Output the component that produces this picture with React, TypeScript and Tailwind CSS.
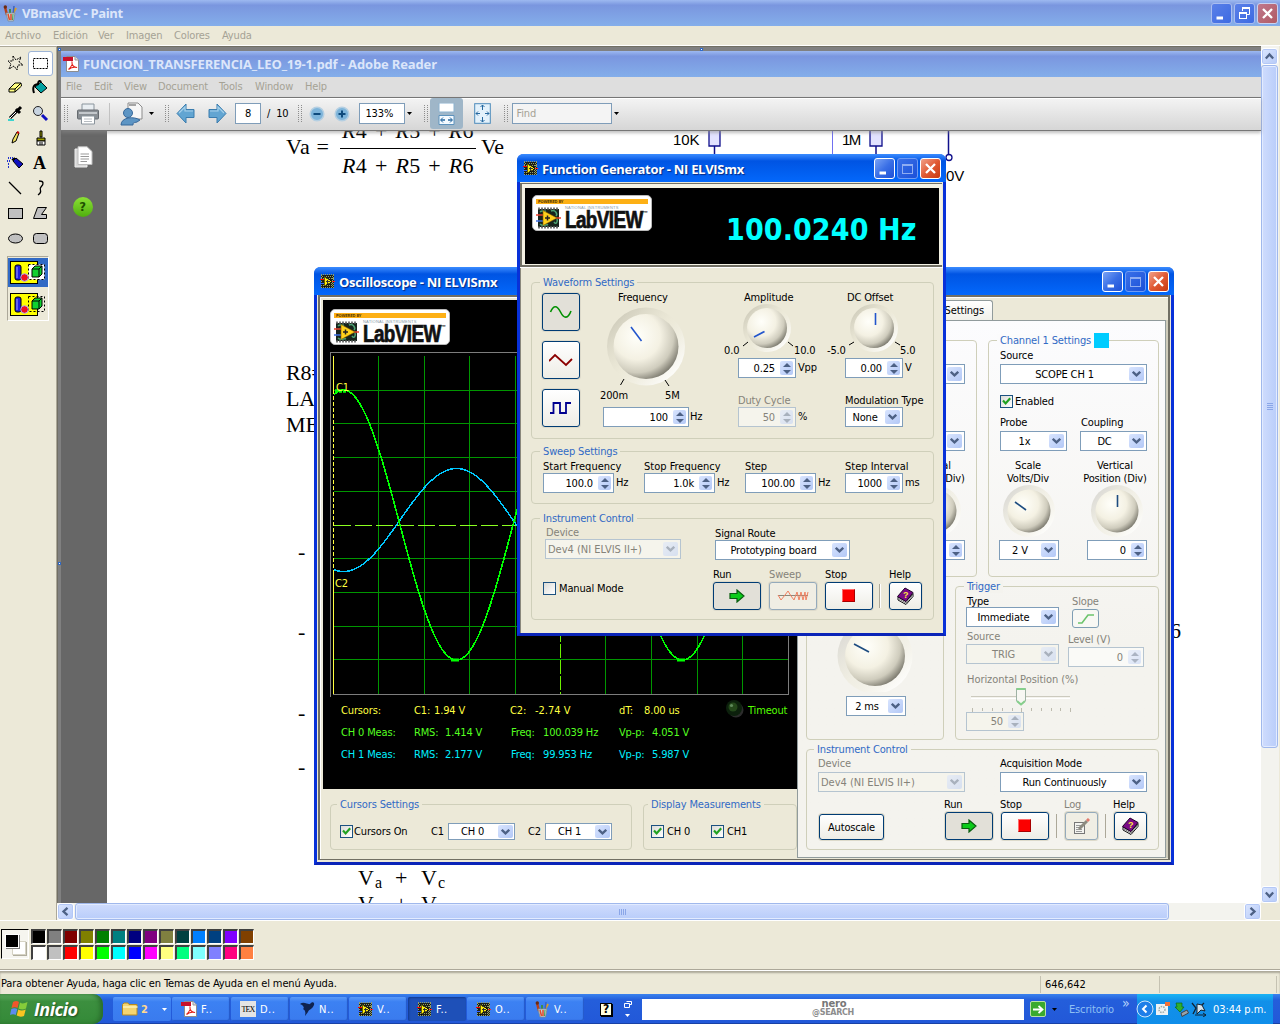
import React from 'react';

type Kids = { children?: React.ReactNode };

const T = ({ c = '', children }: { c?: string } & Kids) => (
  <div className={'h-[13px] shrink-0 whitespace-pre leading-[13px] ' + c}>{children}</div>
);

/* ---------- small XP controls ---------- */

const Chevron = () => (
  <svg width="9" height="6" viewBox="0 0 9 6" fill="none" stroke="#4d6185" strokeWidth="2.3">
    <path d="M0.8 0.8 4.5 4.4 8.2 0.8" />
  </svg>
);

const Select = ({ c, text, off = false, left = false }: { c: string; text: string; off?: boolean; left?: boolean }) => (
  <div className={'flex shrink-0 border p-[2px] ' + (off ? 'border-[#b5c4d0] bg-[#f5f4ec] ' : 'border-[#7f9db9] bg-white ') + c}>
    <div className={'flex min-w-0 flex-1 items-center whitespace-nowrap leading-[13px] ' + (left ? 'tracking-[0px] ' : 'justify-center pr-[3px] ') + (off ? 'text-[#85837a]' : 'text-black')}>{text}</div>
    <div className={'flex w-[15px] items-center justify-center rounded-[2px] bg-gradient-to-br from-[#d8e4fe] to-[#b3c8f6] ' + (off ? 'opacity-45' : '')}>
      <Chevron />
    </div>
  </div>
);

const Spin = ({ c, text, off = false }: { c: string; text: string; off?: boolean }) => (
  <div className={'flex shrink-0 border p-[2px] ' + (off ? 'border-[#b5c4d0] bg-[#f5f4ec] ' : 'border-[#7f9db9] bg-white ') + c}>
    <div className={'flex min-w-0 flex-1 items-center justify-end pr-[5px] leading-[13px] ' + (off ? 'text-[#85837a]' : 'text-black')}>{text}</div>
    <div className={'flex w-[13px] flex-col items-center justify-center gap-[3px] rounded-[2px] bg-gradient-to-br from-[#d8e4fe] to-[#b3c8f6] ' + (off ? 'opacity-45' : '')}>
      <svg width="8" height="4" viewBox="0 0 8 4"><path d="M0 4 4 0 8 4Z" fill="#4d6185" /></svg>
      <svg width="8" height="4" viewBox="0 0 8 4"><path d="M0 0 4 4 8 0Z" fill="#4d6185" /></svg>
    </div>
  </div>
);

const Check = ({ on = false }: { on?: boolean }) => (
  <div className="flex h-[13px] w-[13px] shrink-0 items-center justify-center border border-[#1c5180] bg-gradient-to-br from-[#dcdcd7] to-white">
    {on && <svg width="9" height="9" viewBox="0 0 9 9" fill="none" stroke="#21a121" strokeWidth="2.2"><path d="M1 3.6 3.6 6.4 8.2 1.2" /></svg>}
  </div>
);

const Btn = ({ c, off = false, down = false, children }: { c: string; off?: boolean; down?: boolean } & Kids) => (
  <div className={'flex h-[28px] shrink-0 items-center justify-center rounded-[3px] border shadow-[0_0_0_1px_#dddacb] ' + (off ? 'border-[#94aabb] bg-[#f0eee4] ' : down ? 'border-[#003c74] bg-[#e2e0d8] ' : 'border-[#003c74] bg-gradient-to-b from-white to-[#eeede6] ') + c}>
    {children}
  </div>
);

const Group = ({ c, title, lc = 'bg-[#ece9d8]', extra, children }: { c: string; title: string; lc?: string; extra?: React.ReactNode } & Kids) => (
  <div className={'shrink-0 rounded-[4px] border border-[#cfcfba] ' + c}>
    <div className="-mt-[7px] ml-[8px] flex h-[13px] items-center">
      <span className={'h-[13px] whitespace-nowrap px-[3px] leading-[13px] text-[#316ac5] ' + lc}>{title}</span>
      {extra}
    </div>
    {children}
  </div>
);

const Knob = ({ w, h, cx, cy, r, rim, p, ticks = '', c = '', dark = false }: { w: number; h: number; cx: number; cy: number; r: number; rim: number; p: string; ticks?: string; c?: string; dark?: boolean }) => {
  const id = 'k' + w + h + cx + (dark ? 'd' : '');
  return (
    <svg width={w} height={h} viewBox={`0 0 ${w} ${h}`} className={'shrink-0 ' + c}>
      <defs>
        <linearGradient id={id + 'a'} x1="0.1" y1="0.1" x2="0.9" y2="0.9">
          <stop offset="0" stopColor={dark ? '#d9d8d4' : '#cdcab9'} />
          <stop offset="0.5" stopColor="#ece9d8" stopOpacity="0.5" />
          <stop offset="1" stopColor="#ffffff" />
        </linearGradient>
        <radialGradient id={id + 'b'} cx="0.36" cy="0.34" r="0.72">
          <stop offset="0" stopColor="#fffffa" />
          <stop offset="0.5" stopColor="#f4f1e3" />
          <stop offset="0.78" stopColor="#cfccbd" />
          <stop offset="1" stopColor="#77756a" />
        </radialGradient>
      </defs>
      <circle cx={cx} cy={cy} r={rim} fill={`url(#${id}a)`} />
      <circle cx={cx} cy={cy} r={r} fill={`url(#${id}b)`} />
      <path d={p} stroke={dark ? '#1d4c80' : '#2255cc'} strokeWidth="1.6" fill="none" />
      <path d={ticks} stroke="#000" strokeWidth="1" fill="none" />
    </svg>
  );
};

/* ---------- icons ---------- */

const LvIcon = ({ s = 15 }: { s?: number }) => (
  <svg width={s} height={s} viewBox="0 0 15 15" shapeRendering="crispEdges" className="shrink-0">
    <rect x="1" y="1" width="13" height="13" fill="#1c1f16" />
    <path d="M1 .5H14M1 13.500H14M2 2.500H14M1 11.500H14M1 4.500H14M1 9.500H14" stroke="#93a06a" strokeDasharray="1 1" />
    <path d="M1.500 1V14M13.500 1V14M12.500 2V13" stroke="#93a06a" strokeDasharray="1 1" />
    <path d="M0 5.500H4" stroke="#f00" /><path d="M0 9.500H4" stroke="#36f" /><path d="M11 7.500H15" stroke="#f22" />
    <path d="M4 2.500V12.500L12 7.500Z" fill="#ffee10" stroke="#000" strokeWidth=".6" />
    <path d="M5.500 7.500H9.500M7.500 5.500V9.500" stroke="#333" />
  </svg>
);

const PaintIcon = () => (
  <svg width="15" height="17" viewBox="0 0 15 17" className="shrink-0">
    <path d="M4 10 2 2" stroke="#b8401c" strokeWidth="2.4" /><circle cx="2.300" cy="2" r="1.700" fill="#6b2a12" />
    <path d="M7 10 7 4" stroke="#3d8f4a" strokeWidth="2" /><path d="M9 10 13 3" stroke="#e0a020" strokeWidth="2" />
    <path d="M10 10 11 1" stroke="#3b62c0" strokeWidth="1.500" />
    <path d="M3 8H12L10.500 16H5Z" fill="#c9d3d8" stroke="#7e8a90" strokeWidth=".8" /><path d="M5 9 6.500 15M8 9V15" stroke="#e04a28" strokeWidth="1.500" /><path d="M10 9 9.500 15" stroke="#3da44e" />
  </svg>
);

const PdfIcon = ({ c = '' }: { c?: string }) => (
  <svg width="16" height="16" viewBox="0 0 16 16" className={'shrink-0 ' + c}>
    <path d="M3.500 .5H12L15.500 4V15.500H3.500Z" fill="#fff" stroke="#8d8d8d" /><path d="M12 .5V4H15.500" fill="#ddd" stroke="#999" />
    <path d="M0 1H10V5H0Z" fill="#c8102a" /><path d="M5.500 13.500C8 11 9.500 8 9 6.500 8.500 9 11 11.500 14 11.500 11 10.500 8 11.500 5.500 13.500Z" fill="none" stroke="#e2231a" strokeWidth="1.100" />
  </svg>
);

const RunArrow = () => (
  <svg width="16" height="14" viewBox="0 0 16 14"><path d="M1 4.500H8V1L15 7 8 13V9.500H1Z" fill="#0ccb1a" stroke="#0a5d10" strokeWidth="1.200" /></svg>
);
const StopSq = () => <div className="-mt-px mr-px h-[13px] w-[13px] border border-t-[#ff6a6a] border-l-[#ff6a6a] border-r-[#a80000] border-b-[#a80000] bg-[#fb0000]" />;
const HelpBook = () => (
  <svg width="19" height="18" viewBox="0 0 19 18">
    <path d="M2 10 10 14.500 17 6.500V9.500L10 17.500 2 13Z" fill="#fff" stroke="#111" /><path d="M3 12 10 16 16.500 8.500" stroke="#777" fill="none" />
    <path d="M1.500 9.500 9 1 17 5.500 10 14.500Z" fill="#7a0a86" stroke="#20002a" />
    <text x="7" y="11" fontSize="9" fontWeight="700" fill="#ffe93b" fontFamily="Liberation Sans">?</text>
  </svg>
);

const WinBtn = ({ kind, tone = 'blue', act = true }: { kind: 'min' | 'max' | 'restore' | 'close'; tone?: string; act?: boolean }) => (
  <div className={'flex h-[21px] w-[21px] shrink-0 items-center justify-center rounded-[3px] border ' +
    (kind === 'close' ? (act ? 'border-white bg-gradient-to-br from-[#f0a088] via-[#e05a34] to-[#c8380c]' : 'border-[#c9d2f0] bg-gradient-to-br from-[#c0788c] to-[#b05a64]')
      : tone === 'dim' ? 'border-[#6f9bf4] bg-gradient-to-br from-[#3a70e8] to-[#1c50d8]'
      : act ? 'border-white bg-gradient-to-br from-[#7aa2f4] via-[#3a6fe6] to-[#1f50d6]' : 'border-[#a9bdf0] bg-gradient-to-br from-[#5a80e8] to-[#3d6ae2]')}>
    <svg width="15" height="15" viewBox="0 0 15 15" fill="none" stroke="#fff">
      {kind === 'min' && <path d="M2.500 12H9" strokeWidth="3" />}
      {kind === 'max' && <><rect x="2.500" y="3.500" width="10" height="9" stroke="#8fadf2" /><path d="M2 4H13" stroke="#8fadf2" strokeWidth="2" /></>}
      {kind === 'restore' && <><path d="M5.500 5V2.500H12.500V8.500H10" /><path d="M5 2H13" strokeWidth="2" /><rect x="2.500" y="6.500" width="7" height="6" /><path d="M2 7H10" strokeWidth="2" /></>}
      {kind === 'close' && <path d="M3 3 12 12M12 3 3 12" strokeWidth="2.300" />}
    </svg>
  </div>
);

const TitleBar = ({ title, tc }: { title: string; tc: string }) => (
  <div className="flex h-[28px] shrink-0 items-center rounded-t-[6px] bg-gradient-to-b from-[#3a8cff] via-[#0054e3] via-25% to-[#0468fb] pr-[5px] pl-[6px]">
    <LvIcon />
    <div className={"ml-[4px] flex-1 whitespace-nowrap pt-[2px] font-['Open_Sans'] text-[13px] leading-[18px] font-bold text-white [text-shadow:1px_1px_1px_#0a2a80] " + tc}>{title}</div>
    <div className="flex gap-[2px] pt-px"><WinBtn kind="min" /><WinBtn kind="max" tone="dim" /><WinBtn kind="close" /></div>
  </div>
);

const LabLogo = ({ c }: { c: string }) => (
  <div className={'h-[36px] w-[120px] shrink-0 rounded-[5px] border border-[#b9b9b9] bg-white px-[3px] pt-[3px] ' + c}>
    <div className="h-[5px] bg-[#fdb015] pl-[2px] text-[4px] leading-[5px] font-bold text-[#5a3a00]">POWERED BY</div>
    <div className="flex pt-[2px]">
      <svg width="25" height="23" viewBox="0 0 25 23" className="mt-px shrink-0">
        <rect x="2" y="2" width="21" height="18" fill="#17241c" />
        <path d="M2 1.500H23M2 20.500H23" stroke="#777" strokeWidth="2" strokeDasharray="2 1" />
        <path d="M4 17C7 20 10 17 12 18M15 4C19 2 22 7 20 9M18 15C20 18 22 15 21 12M4 5C6 3 8 5 10 4" stroke="#4ea373" strokeWidth="1.500" fill="none" />
        <path d="M0 8H8" stroke="#e8402c" strokeWidth="1.500" /><path d="M0 14H8" stroke="#3d6fe0" strokeWidth="1.500" /><path d="M19 11H25" stroke="#e8402c" strokeWidth="1.500" />
        <path d="M7 3.500V18.500L21 11Z" fill="#ffd21c" stroke="#8a5a00" strokeWidth=".6" /><path d="M9 11H14M11.500 8.500V13.500" stroke="#222" strokeWidth="1.500" />
      </svg>
      <div className="ml-[4px] font-['Liberation_Sans']">
        <div className="h-[4px] text-[4px] leading-[4px] tracking-[0.2px] whitespace-nowrap text-[#8899a6]">NATIONAL INSTRUMENTS</div>
        <div className="flex h-[19px] origin-left scale-x-[.82] text-[23px] leading-[20px] font-bold tracking-[-0.7px] text-[#111] [-webkit-text-stroke:0.7px_#111]">LabVIEW<span className="text-[6px] leading-[7px] [-webkit-text-stroke:0px]">™</span></div>
      </div>
    </div>
  </div>
);

/* ---------- Function generator ---------- */

const Unit = ({ children }: Kids) => <T c="ml-[2px] mt-[3px]">{children}</T>;

const FunctionGenerator = () => (
  <div className="absolute top-[154px] left-[517px] flex h-[482px] w-[429px] flex-col rounded-t-[7px] border-x-[3px] border-b-[3px] border-[#0831d9] border-b-[#0a24b8] bg-[#ece9d8]">
    <div className="-mx-[3px] flex flex-col"><TitleBar title="Function Generator - NI ELVISmx" tc="tracking-[-0.3px]" /></div>
    <div className="flex h-[86px] shrink-0 flex-col border-b border-[#fff] pt-px pr-[1px]">
      <div className="h-[84px] border-t border-b-2 border-l-2 border-[#716f64] bg-[#f4f2e4] pt-[4px] pr-[2px] pl-[3px]">
        <div className="flex h-[76px] w-[414px] bg-black">
          <LabLogo c="mt-[7px] ml-[7px]" />
          <div className="mt-[27px] ml-[74px] text-[30px] leading-[30px] font-bold tracking-[0.1px] whitespace-nowrap text-[#00ffff]">100.0240 Hz</div>
        </div>
      </div>
    </div>
    <div className="flex flex-1 flex-col border-l border-[#8a887c] pl-[10px]">
      <Group c="mt-[14px] flex h-[157px] w-[403px] flex-col" title="Waveform Settings">
        <div className="flex">
          <div className="mt-[4px] ml-[10px] flex w-[38px] flex-col gap-[10px]">
            <Btn c="h-[38px]! w-[38px]" down><svg width="24" height="14" viewBox="0 0 24 14" fill="none" stroke="#009000" strokeWidth="1.600"><path d="M1.500 7C4.500 0 8 0 11.500 7S19 14 22 6" /></svg></Btn>
            <Btn c="h-[38px]! w-[38px]"><svg width="24" height="14" viewBox="0 0 24 14" fill="none" stroke="#8b0000" strokeWidth="1.800"><path d="M0 8 6 2 17 12 23 6" /></svg></Btn>
            <Btn c="h-[38px]! w-[38px]"><svg width="24" height="14" viewBox="0 0 24 14" fill="none" stroke="#000090" strokeWidth="1.800"><path d="M1 12H4.500V2H11V12H17V2H22" /></svg></Btn>
          </div>
          <div className="mt-[2px] ml-[10px] flex w-[124px] flex-col">
            <T c="ml-[28px]">Frequency</T>
            <Knob w={90} h={85} cx={48} cy={42.500} r={32.500} rim={39} p="M33 23 43.500 37" ticks="M26 75 22.500 81M67 76 71 82" c="ml-[8px]" />
            <div className="flex"><T c="ml-[10px] w-[65px]">200m</T><T>5M</T></div>
            <div className="mt-[5px] flex"><Spin c="ml-[13px] h-[20px] w-[86px]" text="100" /><T c="mt-[3px] ml-[1px]">Hz</T></div>
          </div>
          <div className="mt-[2px] flex w-[106px] flex-col">
            <T c="ml-[30px]">Amplitude</T>
            <div className="ml-[10px] flex items-end"><T c="w-[17px]">0.0</T><Knob w={52} h={53} cx={26} cy={24} r={20} rim={24} p="M13 33 23.500 27.500" ticks="M2 42 7 38M47 38 52 42" /><T c="ml-[1px] w-[24px]">10.0</T></div>
            <div className="mt-[1px] flex"><Spin c="ml-[24px] h-[20px] w-[58px]" text="0.25" /><Unit>Vpp</Unit></div>
            <T c="mt-[16px] ml-[24px] text-[#85837a]">Duty Cycle</T>
            <div className="flex"><Spin off c="ml-[24px] h-[20px] w-[58px]" text="50" /><Unit>%</Unit></div>
          </div>
          <div className="mt-[2px] flex w-[110px] flex-col">
            <T c="ml-[27px]">DC Offset</T>
            <div className="ml-[7px] flex items-end"><T c="w-[20px]">-5.0</T><Knob w={53} h={53} cx={27} cy={24} r={20} rim={24} p="M28.500 9V21" ticks="M2 41 7 38M48 38 53 41" /><T>5.0</T></div>
            <div className="mt-[1px] flex"><Spin c="ml-[25px] h-[20px] w-[58px]" text="0.00" /><Unit>V</Unit></div>
            <T c="mt-[16px] ml-[25px]">Modulation Type</T>
            <Select c="ml-[25px] h-[20px] w-[58px]" text="None" />
          </div>
        </div>
      </Group>
      <Group c="mt-[12px] h-[53px] w-[403px]" title="Sweep Settings">
        <div className="mt-[2px] ml-[11px] flex">
          <div className="w-[101px]"><T c="tracking-[0px]">Start Frequency</T><div className="flex"><Spin c="h-[20px] w-[71px]" text="100.0" /><Unit>Hz</Unit></div></div>
          <div className="w-[101px]"><T c="tracking-[0px]">Stop Frequency</T><div className="flex"><Spin c="h-[20px] w-[71px]" text="1.0k" /><Unit>Hz</Unit></div></div>
          <div className="w-[100px]"><T>Step</T><div className="flex"><Spin c="h-[20px] w-[71px]" text="100.00" /><Unit>Hz</Unit></div></div>
          <div><T c="tracking-[0px]">Step Interval</T><div className="flex"><Spin c="h-[20px] w-[58px]" text="1000" /><Unit>ms</Unit></div></div>
        </div>
      </Group>
      <Group c="mt-[14px] h-[102px] w-[403px]" title="Instrument Control">
        <div className="flex">
          <div className="w-[170px] pl-[11px]">
            <T c="mt-[1px] ml-[3px] text-[#85837a]">Device</T>
            <Select off left c="ml-[2px] h-[20px] w-[136px]" text="Dev4 (NI ELVIS II+)" />
            <div className="mt-[23px] flex"><Check /><T c="ml-[3px]">Manual Mode</T></div>
          </div>
          <div className="pl-[11px]">
            <T c="mt-[2px] ml-[2px]">Signal Route</T>
            <Select c="ml-[2px] h-[20px] w-[135px]" text="Prototyping board" />
            <div className="mt-[8px] flex">
              <div className="w-[56px]"><T>Run</T><Btn down c="mt-[1px] w-[48px]"><RunArrow /></Btn></div>
              <div className="w-[56px]"><T c="text-[#85837a]">Sweep</T>
                <Btn off c="mt-[1px] w-[48px]"><svg width="32" height="12" viewBox="0 0 32 12" fill="none"><path d="M1 5.500H31" stroke="#8a887c" /><path d="M1 5 4 10 8 5 11 1 14 6 17 10 20 2 22 10 24 2 26 10 28 2 29 10 31 2" stroke="#f08060" /></svg></Btn>
              </div>
              <div className="w-[54px]"><T>Stop</T><Btn c="mt-[1px] w-[48px]"><StopSq /></Btn></div>
              <div className="mt-[16px] h-[24px] w-[10px] border-l border-[#aca899] shadow-[inset_1px_0_0_#fff]" />
              <div><T>Help</T><Btn c="mt-[1px] w-[33px]"><HelpBook /></Btn></div>
            </div>
          </div>
        </div>
      </Group>
    </div>
  </div>
);

/* ---------- Oscilloscope ---------- */

const wave = (mid: number, amp: number) => {
  let d = '';
  for (let x = 4; x <= 458; x += 2) {
    const y = mid + amp * Math.cos((2 * Math.PI * (x - 13.500)) / 226);
    d += (d ? 'L' : 'M') + x + ' ' + y.toFixed(1);
  }
  return d;
};

const Plot = () => (
  <svg width="460" height="346" viewBox="0 0 460 346" className="ml-[7px] shrink-0">
    <g shapeRendering="crispEdges" fill="none">
      <path d="M.5 345V.5H459M3 342.500H458.500V.5" stroke="#7d7d7d" />
      <path d="M48.500 4V342M94.500 4V342M139.500 4V342M185.500 4V342M275.500 4V342M321.500 4V342M367.500 4V342M412.500 4V342M4 38.500H458M4 71.500H458M4 105.500H458M4 139.500H458M4 206.500H458M4 240.500H458M4 274.500H458M4 307.500H458" stroke="#009600" />
      <path d="M230.500 4V342" stroke="#6cf000" strokeDasharray="14 2" />
      <path d="M4 173.500H458" stroke="#8cff20" strokeDasharray="17 4" />
      <path d="M3.500 4V38M3.500 220V342" stroke="#ffff40" />
      <path d="M3.500 38V220" stroke="#ffff40" strokeDasharray="4 2" />
    </g>
    <path d={wave(168, 51.500)} stroke="#00c8ff" strokeWidth="1.500" fill="none" shapeRendering="crispEdges" />
    <path d={wave(173, -135)} stroke="#00ff00" strokeWidth="1.600" fill="none" shapeRendering="crispEdges" />
    <path d="M5 39H17" stroke="#00ff00" strokeWidth="3.500" strokeDasharray="3 1" />
    <path d="M121 308H129M347 308H355" stroke="#00ff00" strokeWidth="3" />
    <text x="6" y="39" fontSize="11" fill="#ffff40">C1</text>
    <text x="5" y="235" fontSize="11" fill="#ffff40">C2</text>
  </svg>
);

const Channel = ({ n }: { n: number }) => (
  <Group c="h-[237px] w-[171px]" title={'Channel ' + n + ' Settings'} lc="bg-[#fbfbfc]" extra={<span className={'h-[15px] w-[15px] ' + (n ? 'bg-[#00ccff]' : 'bg-[#00ff00]')} />}>
    <div className="pl-[11px]">
      <T c="mt-[2px]">Source</T>
      <Select c="mt-[2px] h-[20px] w-[147px]" text={'SCOPE CH ' + n} />
      <div className="mt-[11px] flex"><Check on /><T c="ml-[2px]">Enabled</T></div>
      <div className="mt-[8px] flex"><T c="w-[81px]">Probe</T><T>Coupling</T></div>
      <div className="mt-[2px] flex gap-[13px]"><Select c="h-[20px] w-[67px]" text="1x" /><Select c="h-[20px] w-[67px]" text="DC" /></div>
      <div className="mt-[8px] flex text-center">
        <div className="w-[56px]"><T>Scale</T><T>Volts/Div</T></div>
        <div className="ml-[20px] w-[78px]"><T>Vertical</T><T>Position (Div)</T></div>
      </div>
      <div className="flex">
        <Knob dark w={60} h={55} cx={29} cy={26} r={21.500} rim={26} p="M15 17 26 25" />
        <Knob dark w={61} h={55} cx={29} cy={26} r={21.500} rim={26} p="M29.500 10V22" c="ml-[28px]" />
      </div>
      <div className="flex"><Select c="-ml-[1px] h-[20px] w-[60px]" text="2 V" /><Spin c="ml-[28px] h-[20px] w-[60px]" text="0" /></div>
    </div>
  </Group>
);

const Oscilloscope = () => (
  <div className="absolute top-[267px] left-[314px] flex h-[598px] w-[860px] flex-col rounded-t-[7px] border-x-[3px] border-b-[3px] border-[#0831d9] border-b-[#0a24b8] bg-[#ece9d8]">
    <div className="-mx-[3px] flex flex-col"><TitleBar title="Oscilloscope - NI ELVISmx" tc="-ml-px tracking-[-0.25px]" /></div>
    <div className="mx-[1px] mb-[2px] flex flex-1 border-x-2 border-t-2 border-b border-[#716f64] bg-[#ece9d8] pt-[3px] pl-[3px] shadow-[inset_1px_1px_0_#fff]">
      <div className="flex w-[474px] shrink-0 flex-col">
        <div className="flex h-[489px] flex-col bg-black">
          <LabLogo c="mt-[9px] ml-[7px]" />
          <div className="mt-[7px] flex"><Plot /></div>
          <div className="mt-[6px] ml-[18px] flex text-[#ffff40]"><T c="w-[73px]">Cursors:</T><T c="w-[20px]">C1:</T><T c="w-[76px]">1.94 V</T><T c="w-[25px]">C2:</T><T c="w-[84px] tracking-[0px]">-2.74 V</T><T c="w-[25px]">dT:</T><T c="w-[82px]">8.00 us</T>
            <svg width="19" height="19" viewBox="0 0 19 19" className="-mt-[5px] -ml-px -mb-px"><circle cx="11" cy="11" r="7.500" fill="#2c2c2c" /><circle cx="9" cy="9" r="8" fill="#0c200c" /><circle cx="8" cy="8" r="4.500" fill="#24481a" /><circle cx="6.500" cy="6.500" r="1.600" fill="#5f8a5a" /></svg>
            <T c="ml-[4px] text-[#55ff00]">Timeout</T></div>
          <div className="mt-[9px] ml-[18px] flex text-[#55ff20]"><T c="w-[73px]">CH 0 Meas:</T><T c="w-[31px]">RMS:</T><T c="w-[66px]">1.414 V</T><T c="w-[32px]">Freq:</T><T c="w-[76px]">100.039 Hz</T><T c="w-[33px]">Vp-p:</T><T>4.051 V</T></div>
          <div className="mt-[9px] ml-[18px] flex text-[#00f0ff]"><T c="w-[73px]">CH 1 Meas:</T><T c="w-[31px]">RMS:</T><T c="w-[66px]">2.177 V</T><T c="w-[32px]">Freq:</T><T c="w-[76px]">99.953 Hz</T><T c="w-[33px]">Vp-p:</T><T>5.987 V</T></div>
        </div>
        <div className="mt-[15px] flex overflow-visible pl-[7px]">
          <Group c="h-[46px] w-[302px]" title="Cursors Settings" lc="-ml-[2px] bg-[#ece9d8]">
            <div className="mt-[12px] ml-[9px] flex items-start">
              <div className="mt-[2px] flex w-[91px]"><Check on /><T c="ml-[1px]">Cursors On</T></div>
              <T c="mt-[2px] w-[17px]">C1</T><Select c="h-[17px] w-[67px] p-[1px]!" text="CH 0" />
              <T c="mt-[2px] ml-[13px] w-[17px]">C2</T><Select c="h-[17px] w-[67px] p-[1px]!" text="CH 1" />
            </div>
          </Group>
          <Group c="ml-[11px] h-[46px] w-[154px]" title="Display Measurements" lc="-ml-[4px] bg-[#ece9d8]">
            <div className="mt-[14px] ml-[7px] flex"><Check on /><T c="ml-[3px] w-[44px]">CH 0</T><Check on /><T c="ml-[3px]">CH1</T></div>
          </Group>
        </div>
      </div>
      <div className="flex w-[370px] shrink-0 flex-col">
        <div className="flex h-[20px] pl-[2px]">
          <div className="w-[80px] rounded-t-[3px] border border-b-0 border-[#919b9c] bg-[#fcfcfe] pt-[3px] pl-[6px]"><T>Basic Settings</T></div>
          <div className="flex w-[114px] justify-end rounded-t-[3px] border border-b-0 border-[#919b9c] bg-gradient-to-b from-white to-[#f0f0ea] pt-[3px] pr-[8px]"><T>Advanced Settings</T></div>
        </div>
        <div className="flex h-[538px] w-[369px] flex-col border border-[#919b9c] bg-gradient-to-b from-[#fcfcfe] via-[#f4f3ee] via-60% to-[#f4f3ee] pl-[8px] shadow-[2px_0_0_#cfccbb]">
          <div className="mt-[19px] flex gap-[11px]"><Channel n={0} /><Channel n={1} /></div>
          <div className="mt-[9px] flex gap-[11px]">
            <Group c="flex h-[154px] w-[138px] flex-col" title="Timebase" lc="bg-[#f4f3ee]">
              <T c="mt-[2px] ml-[11px]">Time/Div</T>
              <Knob dark w={80} h={84} cx={39} cy={48} r={30} rim={37.500} p="M18 36 33 44" c="ml-[29px]" />
              <Select c="mt-[4px] ml-[39px] h-[20px] w-[60px]" text="2 ms" />
            </Group>
            <Group c="h-[154px] w-[204px]" title="Trigger" lc="bg-[#f4f3ee]">
              <div className="flex pl-[10px]">
                <div className="w-[102px]">
                  <T c="mt-[2px] ml-[1px]">Type</T>
                  <Select c="-mt-[1px] h-[20px] w-[93px]" text="Immediate" />
                  <T c="mt-[3px] ml-[1px] text-[#85837a]">Source</T>
                  <Select off c="mt-[1px] h-[20px] w-[93px]" text="TRIG" />
                  <T c="mt-[9px] ml-[1px] tracking-[-0.05px] text-[#85837a]">Horizontal Position (%)</T>
                </div>
                <div>
                  <T c="mt-[2px] ml-[4px] text-[#85837a]">Slope</T>
                  <div className="mt-[1px] ml-[4px] flex h-[19px] w-[27px] items-center justify-center rounded-[3px] border border-[#7f9eb4] bg-[#f8f8f4]"><svg width="18" height="11" viewBox="0 0 18 11" fill="none" stroke="#6cc46c" strokeWidth="1.600"><path d="M1 10H5L11 2H17" /></svg></div>
                  <T c="mt-[5px] text-[#85837a]">Level (V)</T>
                  <Spin off c="mt-[1px] h-[20px] w-[76px] bg-[#fafaf7]!" text="0" />
                </div>
              </div>
              <svg width="108" height="26" viewBox="0 0 108 26" className="ml-[12px]">
                <path d="M3 10.500H102" stroke="#cccabe" strokeWidth="1" /><path d="M3 12.500H102" stroke="#fff" />
                <path d="M4.500 22V26M14.500 22V25M24.500 22V25M34.500 22V25M44.500 22V25M53.500 22V26M63.500 22V25M73.500 22V25M83.500 22V25M92.500 22V25M102.500 22V26" stroke="#bdbbae" />
                <path d="M48.500 2.500H57.500V15L53 19 48.500 15Z" fill="#f7f7f3" stroke="#9fb2a4" /><path d="M48.500 3H57.500M49 15 53 18.500 57 15" stroke="#86cf8c" strokeWidth="2" fill="none" />
              </svg>
              <Spin off c="ml-[10px] h-[19px] w-[58px]" text="50" />
            </Group>
          </div>
          <Group c="mt-[9px] h-[101px] w-[353px]" title="Instrument Control" lc="bg-[#f4f3ee] -ml-px">
            <div className="flex pl-[11px]">
              <div className="w-[126px]">
                <T c="mt-[1px] text-[#85837a]">Device</T>
                <Select off left c="mt-[2px] h-[20px] w-[147px]" text="Dev4 (NI ELVIS II+)" />
                <Btn c="mt-[22px] ml-[1px] h-[26px]! w-[65px]">Autoscale</Btn>
              </div>
              <div>
                <T c="mt-[1px] ml-[56px]">Acquisition Mode</T>
                <Select c="mt-[2px] ml-[56px] h-[20px] w-[147px]" text="Run Continuously" />
                <div className="mt-[6px] flex">
                  <div className="w-[56px]"><T>Run</T><Btn down c="mt-[1px] ml-[1px] w-[48px]"><RunArrow /></Btn></div>
                  <div className="w-[56px]"><T>Stop</T><Btn c="mt-[1px] ml-[1px] w-[48px]"><StopSq /></Btn></div>
                  <div className="mt-[16px] h-[24px] w-[8px] border-l border-[#aca899]" />
                  <div className="w-[41px]"><T c="text-[#85837a]">Log</T><Btn off c="mt-[1px] ml-[1px] w-[33px]">
                    <svg width="17" height="17" viewBox="0 0 17 17" fill="none"><rect x="1.500" y="4.500" width="10" height="11" fill="#f4f4f0" stroke="#777" /><path d="M3 7.500H8M3 9.500H7M3 11.500H9M3 13.500H9" stroke="#999" /><path d="M6 11 14 3" stroke="#8d8b80" strokeWidth="3" /><path d="M14 3 16 1" stroke="#e07a6c" strokeWidth="3" /></svg>
                  </Btn></div>
                  <div className="mt-[16px] h-[24px] w-[8px] border-l border-[#aca899]" />
                  <div><T>Help</T><Btn c="mt-[1px] ml-[1px] w-[33px]"><HelpBook /></Btn></div>
                </div>
              </div>
            </div>
          </Group>
        </div>
      </div>
    </div>
  </div>
);

/* ---------- Adobe Reader ---------- */

const Grip = ({ c }: { c: string }) => (
  <svg width="4" height="18" viewBox="0 0 4 18" className={'shrink-0 ' + c}><path d="M.5 0V18M3.500 0V18" stroke="#8d8d8d" strokeDasharray="1 1" /></svg>
);
const Caret = ({ c }: { c: string }) => <svg width="5" height="3" viewBox="0 0 5 3" className={'shrink-0 ' + c}><path d="M0 0H5L2.500 3Z" fill="#000" /></svg>;
const Round = ({ plus = false, c }: { plus?: boolean; c: string }) => (
  <svg width="16" height="16" viewBox="0 0 16 16" className={'shrink-0 ' + c}>
    <circle cx="8" cy="8" r="6.800" fill="#7db4da" stroke="#b4cfe2" strokeWidth="1.500" />
    <path d={plus ? 'M4.500 8H11.500M8 4.500V11.500' : 'M4.500 8H11.500'} stroke="#0e4a7c" strokeWidth="2" />
  </svg>
);
const NavArrow = ({ flip = false, c }: { flip?: boolean; c: string }) => (
  <svg width="19" height="21" viewBox="0 0 19 21" className={'shrink-0 ' + c}>
    <path d={flip ? 'M1 6.500H9V1L18 10.500 9 20V14.500H1Z' : 'M18 6.500H10V1L1 10.500 10 20V14.500H18Z'} fill="#62a5d2" stroke="#3a7cae" />
    <path d={flip ? 'M2 8H10V4L16 10' : 'M17 8H9V4L3 10'} stroke="#a5d0ea" strokeWidth="1.200" fill="none" />
  </svg>
);

const Reader = () => (
  <div className="flex w-[1200px] shrink-0 flex-col pt-[4px]">
    <div className="flex h-[26px] shrink-0 items-center bg-gradient-to-b from-[#9db9f0] via-[#7a96df] via-20% to-[#84aeea] pl-[2px]">
      <PdfIcon />
      <div className="ml-[4px] whitespace-nowrap font-['Open_Sans'] text-[13px] leading-[18px] font-bold tracking-[-0.13px] text-[#dce6fa]">FUNCION_TRANSFERENCIA_LEO_19-1.pdf - Adobe Reader</div>
    </div>
    <div className="flex h-[20px] shrink-0 items-center bg-[#dedede] pb-px pl-[5px] text-[#a5a295]">
      <T c="w-[28px]">File</T><T c="w-[30px]">Edit</T><T c="w-[34px]">View</T><T c="w-[61px]">Document</T><T c="w-[36px]">Tools</T><T c="w-[50px]">Window</T><T>Help</T>
    </div>
    <div className="z-1 flex h-[34px] shrink-0 items-center border-t border-b border-[#767676] bg-gradient-to-b from-[#f4f4f4] to-[#d6d6d6] pb-px shadow-[inset_0_1px_0_#fff,0_2px_3px_#8888]">
      <Grip c="ml-[3px]" />
      <svg width="22" height="22" viewBox="0 0 22 22" className="ml-[9px] shrink-0"><path d="M5 1H17V8H5Z" fill="#e9eef2" stroke="#8a949c" /><rect x=".5" y="7" width="21" height="9" rx="1" fill="#8a8f94" stroke="#666b70" /><path d="M2 10H20" stroke="#c4c8cc" strokeWidth="2" /><path d="M4.500 13H17.500V21H4.500Z" fill="#fff" stroke="#8a949c" /><path d="M7 16H15M7 18.500H15" stroke="#b7bcc1" /></svg>
      <div className="ml-[10px] h-[22px] w-px bg-[#c2c2c2]" />
      <svg width="24" height="24" viewBox="0 0 24 24" className="ml-[10px] shrink-0"><path d="M8 1H18L22 5V17H8Z" fill="#f6f6f6" stroke="#8b8b8b" /><path d="M9 3H16" stroke="#555" /><circle cx="8" cy="11" r="4.500" fill="#5d95c4" stroke="#37689a" /><path d="M1 23C1 15 14 14 20 18L17 20C14 21 13 20 13 23Z" fill="#5d95c4" stroke="#37689a" /></svg>
      <Caret c="ml-[5px]" /><Grip c="ml-[11px]" />
      <NavArrow c="ml-[7px]" /><NavArrow flip c="ml-[13px]" />
      <div className="ml-[8px] flex h-[21px] w-[26px] items-center justify-center border border-[#7f9db9] bg-white">8</div>
      <T c="ml-[6px]">/ &nbsp;10</T>
      <Grip c="ml-[10px]" /><Round c="ml-[7px]" /><Round plus c="ml-[9px]" />
      <div className="ml-[9px] flex h-[21px] w-[46px] items-center border border-[#7f9db9] bg-white pl-[5px]">133%</div>
      <Caret c="ml-[2px]" /><Grip c="ml-[12px]" />
      <div className="ml-[2px] flex h-[31px] w-[33px] items-center justify-center rounded-[3px] bg-[#9fb6c8]">
        <svg width="17" height="22" viewBox="0 0 17 22"><path d="M1 0H16V9H1Z" fill="#fff" stroke="#8cb2cf" /><path d="M1 12.500H16V21.500H1Z" fill="#f4faff" stroke="#5d93bd" /><path d="M3 17H7M10 17H14" stroke="#2668a0" strokeWidth="1.300" /><path d="M5 14.500 2.500 17 5 19.500M12 14.500 14.500 17 12 19.500" fill="none" stroke="#2668a0" /></svg>
      </div>
      <svg width="17" height="21" viewBox="0 0 17 21" className="ml-[11px] shrink-0"><rect x=".7" y=".7" width="15.600" height="19.600" fill="#e3f1fb" stroke="#4d8bbb" /><path d="M8.500 2V7M8.500 14V19M2 10.500H6M11 10.500H15" stroke="#2668a0" /><path d="M6.500 4 8.500 2 10.500 4M6.500 17 8.500 19 10.500 17M4 8.500 2 10.500 4 12.500M13 8.500 15 10.500 13 12.500" fill="none" stroke="#2668a0" /></svg>
      <Grip c="ml-[13px]" />
      <div className="ml-[4px] flex h-[21px] w-[100px] items-center border border-[#7f9db9] bg-[#f4f4f4] pl-[3px] text-[#a5a295]">Find</div>
      <Caret c="ml-[2px]" />
    </div>
    <div className="flex min-h-0 flex-1">
      <div className="flex w-[46px] shrink-0 flex-col items-center bg-[#676767] pr-[2px]">
        <svg width="19" height="23" viewBox="0 0 19 23" className="mt-[15px]"><path d="M1 3H13V21H1Z" fill="#d8d8d8" stroke="#eee" /><path d="M4 .7H13L18 5.500V18.500H4Z" fill="#fff" stroke="#bbb" /><path d="M6.500 8H15M6.500 10.500H15M6.500 13H15M6.500 15.500H13" stroke="#999" /></svg>
        <div className="mt-[28px] mr-px flex h-[20px] w-[20px] items-center justify-center rounded-full bg-gradient-to-b from-[#8be234] to-[#4fae0c] text-[13px] leading-[20px] font-bold text-[#1d4f00]">?</div>
      </div>
      <div className="flex min-w-0 flex-1 flex-col overflow-hidden bg-white font-['Liberation_Serif'] text-[22px] leading-[26px] text-black">
        <div className="flex h-[229px] shrink-0 pl-[179px]">
          <div className="mt-[3px] w-[54px] whitespace-nowrap tracking-[0.6px]">Va =</div>
          <div className="-mt-[13px] w-[136px] text-center whitespace-nowrap tracking-[0.3px] [word-spacing:2px]">
            <div className="h-[31px] border-b-[1.5px] border-black"><i>R</i>4 + <i>R</i>5 + <i>R</i>6</div>
            <div className="pt-[4px]"><i>R</i>4 + <i>R</i>5 + <i>R</i>6</div>
          </div>
          <div className="mt-[3px] ml-[5px] w-[40px]">Ve</div>
          <svg width="310" height="60" viewBox="0 0 310 60" className="ml-[147px] shrink-0" fontFamily="Liberation Sans" fontSize="15">
            <text x="5" y="13.500">10K</text><path d="M41 -2H52V15H41Z" fill="#e2e2ff" stroke="#10108c" strokeWidth="1.300" /><path d="M46.500 15V25" stroke="#10108c" strokeWidth="1.500" />
            <path d="M164.500 0V25" stroke="#7070f0" /><text x="174" y="13.500" textLength="19">1M</text>
            <path d="M202 -2H214V15H202Z" fill="#e2e2ff" stroke="#10108c" strokeWidth="1.300" /><path d="M208 15V25M280.500 0V23" stroke="#10108c" strokeWidth="1.500" />
            <circle cx="281" cy="26.500" r="3" fill="#fff" stroke="#10108c" strokeWidth="1.300" /><text x="278" y="50">0V</text>
          </svg>
        </div>
        <div className="shrink-0 pl-[179px]"><p>R8=</p><p>LA</p><p>ME</p></div>
        <div className="mt-[102px] h-[24px] shrink-0 pl-[191px] leading-[24px]">-</div>
        <div className="mt-[56px] flex h-[24px] shrink-0 pl-[191px] leading-[24px]"><span className="w-[872px]">-</span><span className="-mt-px">6</span></div>
        <div className="mt-[57px] h-[24px] shrink-0 pl-[191px] leading-[24px]">-</div>
        <div className="mt-[30px] h-[24px] shrink-0 pl-[191px] leading-[24px]">-</div>
        {[0, 1].map(i => (
          <div key={i} className={'flex h-[26px] shrink-0 pl-[251px] ' + (i ? '' : 'mt-[86px]')}>
            <span className="w-[17px]">V</span><span className="mt-[5px] w-[20px] text-[16px]">a</span><span className="w-[26px]">+</span><span className="w-[17px]">V</span><span className="mt-[5px] text-[16px]">c</span>
          </div>
        ))}
      </div>
    </div>
  </div>
);

/* ---------- Paint ---------- */

const K = '#000';
const tools: React.ReactNode[] = [
  <path key="0" d="M6 1 9 5 14 2 12 7 16 10 11 10 10 15 7 11 2 14 4 9 1 6 6 6Z" fill="none" stroke={K} strokeDasharray="2 1" />,
  <rect key="1" x="1.500" y="3.500" width="14" height="10" fill="none" stroke={K} strokeDasharray="2 1" />,
  <g key="2" stroke={K}><path d="M2 9 8 3H14L14.500 6 8 12H2Z" fill="#ffff80" /><path d="M2 9H8L14 3M8 9V12" fill="none" /></g>,
  <g key="3" stroke={K}><path d="M3 7 9 2 15 8 9 13Z" fill="#00a0a0" /><path d="M2 13C0 7 2 4 7 4M9 2C8 0 6 1 6 4" strokeWidth="2" fill="none" /></g>,
  <g key="4"><path d="M3 13 10 6" stroke={K} strokeWidth="3" /><path d="M3 13 9 7" stroke="#fff" /><path d="M9 4 13 8M10 6 14 2" stroke={K} strokeWidth="3" /><path d="M1 15H7" stroke="#0cc" strokeWidth="1.500" /></g>,
  <g key="5"><circle cx="6" cy="6" r="4.500" fill="#c8d4e0" stroke="#222" /><path d="M10 10 15 15" stroke="#1010c0" strokeWidth="3" /></g>,
  <g key="6"><path d="M5 13 6 9 10 2 12 3 9 11Z" fill="#f0e060" stroke={K} /><path d="M10 2 12 3" stroke="#c00" strokeWidth="2" /></g>,
  <g key="7" stroke={K}><path d="M8 1H10V7H8Z" fill="#a0a000" /><path d="M5 8H13V11H5Z" fill="#a0a000" /><path d="M5 11H13V15H5ZM8 12V15M10 12V15" fill="#fff" /></g>,
  <g key="8"><path d="M6 6 9 3 16 9 12 13Z" fill="#1010c0" stroke={K} /><path d="M5 5 8 3" stroke={K} strokeWidth="2" /><path d="M1 3H6M0 6H4M1 9H3M1 12H2" stroke="#2233cc" strokeWidth="2" strokeDasharray="1 1" /></g>,
  <text key="9" x="1" y="14" fontFamily="Liberation Serif" fontWeight="700" fontSize="18">A</text>,
  <path key="10" d="M2 2 14 14" stroke={K} strokeWidth="1.300" />,
  <path key="11" d="M7 1C12 1 12 4 9 7 6 10 12 11 6 15" fill="none" stroke={K} strokeWidth="1.300" />,
  <rect key="12" x="1.500" y="3.500" width="14" height="10" fill="#c0c0c0" stroke={K} />,
  <path key="13" d="M5.500 2.500H14.500L9.500 9.500H14.500V13.500H1.500Z" fill="#c0c0c0" stroke={K} />,
  <ellipse key="14" cx="8.500" cy="8.500" rx="7" ry="4.500" fill="#c0c0c0" stroke={K} />,
  <rect key="15" x="1.500" y="3.500" width="14" height="10" rx="3" fill="#c0c0c0" stroke={K} />,
];

const Opt = ({ solid = false }: { solid?: boolean }) => (
  <svg width="40" height="29" viewBox="0 0 40 29" className={'shrink-0 ' + (solid ? 'bg-[#316ac5]' : '')}>
    <rect x="2.500" y="3.500" width="27" height="22" fill="#ff0" stroke={K} />
    <rect x="20.500" y="6.500" width="16" height="15" fill={solid ? '#fff' : 'none'} stroke={K} strokeDasharray="2 2" />
    <rect x="7" y="7" width="6" height="15" rx="2" fill="#2020e0" stroke={K} /><path d="M9 9V20" stroke="#aaf" />
    <circle cx="16.500" cy="19.500" r="3.800" fill="#f01020" stroke="#aaf" />
    <path d="M24 11 27 8H34V16L31 19H24Z" fill="#10d030" stroke={K} /><path d="M24 11H31L34 8M31 11V19" fill="none" stroke={K} />
  </svg>
);

const swatches = [
  ['bg-[#000000]', 'bg-[#808080]', 'bg-[#800000]', 'bg-[#808000]', 'bg-[#008000]', 'bg-[#008080]', 'bg-[#000080]', 'bg-[#800080]', 'bg-[#808040]', 'bg-[#004040]', 'bg-[#0080ff]', 'bg-[#004080]', 'bg-[#8000ff]', 'bg-[#804000]'],
  ['bg-[#ffffff]', 'bg-[#c0c0c0]', 'bg-[#ff0000]', 'bg-[#ffff00]', 'bg-[#00ff00]', 'bg-[#00ffff]', 'bg-[#0000ff]', 'bg-[#ff00ff]', 'bg-[#ffff80]', 'bg-[#00ff80]', 'bg-[#80ffff]', 'bg-[#8080ff]', 'bg-[#ff0080]', 'bg-[#ff8040]'],
];

const ScrollBtn = ({ d, c }: { d: string; c: string }) => (
  <div className={'flex shrink-0 items-center justify-center rounded-[3px] border border-white bg-gradient-to-br from-[#dbe6fe] to-[#b6caf8] shadow-[inset_0_0_0_1px_#b4c8f6] ' + c}>
    <svg width="9" height="9" viewBox="0 0 9 9" fill="none" stroke="#4d6185" strokeWidth="2.300"><path d={d} /></svg>
  </div>
);

const TaskBtn = ({ icon, text, active = false, textC = 'text-white' }: { icon: React.ReactNode; text: string; active?: boolean; textC?: string }) => (
  <div className={'flex h-[24px] w-[58px] shrink-0 items-center rounded-[2px] pl-[9px] ' + (active ? 'bg-[#1e50b8] shadow-[inset_1px_1px_2px_#123a90]' : 'bg-gradient-to-b from-[#5a9af8] via-[#3c81f3] via-20% to-[#3a7bee] shadow-[inset_-1px_-1px_1px_#2458c8]')}>
    {icon}<span className={'ml-[4px] whitespace-pre tracking-[0.5px] ' + textC}>{text}</span>
  </div>
);

const Taskbar = () => (
  <div className="flex h-[30px] shrink-0 items-center bg-gradient-to-b from-[#3b82ee] via-[#245edb] via-20% to-[#2258d8] text-white shadow-[inset_0_-1px_0_#1941a5]">
    <div className="flex h-[30px] w-[103px] shrink-0 items-center rounded-r-[10px] bg-gradient-to-b from-[#5fae62] via-[#3c8f3f] via-25% to-[#348a38] pl-[10px] shadow-[inset_-3px_0_4px_#2a6d2c]">
      <svg width="19" height="18" viewBox="0 0 19 18" className="shrink-0"><path d="M3 2C5 .5 7.500 .5 9 2L7.500 8C6 6.800 3.500 7 1.500 8Z" fill="#f0562c" /><path d="M10 2.500C12 4 14.500 3.500 17.500 2L16 8.500C13 10 11 9.500 8.500 8.500Z" fill="#84cc3a" /><path d="M1.300 9C3.500 7.800 5.500 8 7.300 9L5.700 15C4 13.800 2 14 0 15Z" fill="#5c8cf0" /><path d="M8.300 9.500C10.500 11 13 10.800 15.700 9.500L14 16C11.500 17 9 16.800 6.700 15.500Z" fill="#fbc422" /></svg>
      <span className="ml-[5px] font-['Open_Sans'] text-[18px] leading-[22px] font-bold italic tracking-[-0.5px] [text-shadow:1px_1px_2px_#1c4a1e]">Inicio</span>
    </div>
    <div className="ml-[10px] flex gap-px">
      <div className="flex h-[24px] w-[58px] items-center rounded-[2px] bg-gradient-to-b from-[#5a9af8] via-[#3c81f3] via-20% to-[#3a7bee] pl-[9px]">
        <svg width="16" height="14" viewBox="0 0 16 14"><path d="M.5 2.500 2 1H6L7 2.500H15V13H.5Z" fill="#f4d470" stroke="#b88a20" /><path d="M1 5H15.500" stroke="#fff3b8" strokeWidth="1.500" /></svg>
        <span className="ml-[3px] font-bold text-[#ffd890]">2</span>
        <svg width="5" height="3" viewBox="0 0 5 3" className="ml-[14px]"><path d="M0 0H5L2.500 3Z" fill="#fff" /></svg>
      </div>
      <TaskBtn icon={<PdfIcon />} text="F.." />
      <TaskBtn icon={<div className="flex h-[16px] w-[16px] items-center justify-center bg-[#e4e4e4] font-['Liberation_Serif'] text-[8px] tracking-[-0.8px] text-black">TEX</div>} text="D.." />
      <TaskBtn icon={<svg width="16" height="16" viewBox="0 0 16 16"><path d="M1 3C5 0 9 4 11 3 13 0 16 1 15 4 13 9 10 8 9 11L6 15C7 11 6 9 4 8 6 7 4 4 1 3Z" fill="#0f2350" /></svg>} text="N.." />
      <TaskBtn icon={<LvIcon />} text="V.." />
      <TaskBtn icon={<LvIcon />} text="F.." active />
      <TaskBtn icon={<LvIcon />} text="O.." />
      <TaskBtn icon={<PaintIcon />} text="V.." />
    </div>
    <div className="ml-[16px] flex h-[13px] w-[12px] shrink-0 items-center justify-center border border-black bg-[#ffffe1] text-[12px] leading-[12px] font-bold text-black shadow-[1px_1px_0_#000]">?</div>
    <div className="ml-[11px] flex w-[9px] shrink-0 flex-col items-center gap-[6px]">
      <svg width="8" height="7" viewBox="0 0 8 7" fill="none" stroke="#fff"><path d="M2.500 .5H7.500V3.500H5.500M.5 2.500H5.500V6.500H.5Z" /></svg>
      <svg width="5" height="3" viewBox="0 0 5 3"><path d="M0 0H5L2.500 3Z" fill="#fff" /></svg>
    </div>
    <div className="ml-[10px] flex h-[21px] w-[382px] shrink-0 flex-col items-center justify-center bg-white pb-px font-bold text-[#777]">
      <div className="ml-[2px] h-[9px] font-['DejaVu_Sans'] text-[10px] leading-[8px] tracking-[-0.2px]">nero</div>
      <div className="h-[8px] font-['DejaVu_Sans'] text-[8px] leading-[8px] tracking-[-0.3px] text-[#8d8d8d]">@SEARCH</div>
    </div>
    <div className="ml-[6px] flex h-[16px] w-[16px] shrink-0 items-center justify-center rounded-[2px] border border-[#b8e0a8] bg-[#3aaa2e]"><svg width="11" height="9" viewBox="0 0 11 9" fill="none" stroke="#fff" strokeWidth="1.800"><path d="M0 4.500H9M5.500 1 9.500 4.500 5.500 8" /></svg></div>
    <Caret c="ml-[6px]" />
    <span className="ml-[12px] w-[46px] whitespace-nowrap tracking-[-0.15px] text-[#8fc0f4]">Escritorio</span>
    <span className="-mt-[12px] ml-[7px] w-[15px] text-[14px] text-[#b8d4fa]">»</span>
    <div className="flex h-[30px] w-[136px] items-center bg-gradient-to-b from-[#1bb4f4] via-[#1290e9] via-25% to-[#0f8eea]">
      <svg width="18" height="18" viewBox="0 0 18 18" className="-ml-[1px] shrink-0"><circle cx="9" cy="9" r="8" fill="#1f7ee8" stroke="#cfe6fb" /><path d="M10.500 5.500 7 9 10.500 12.500" stroke="#fff" strokeWidth="2" fill="none" /></svg>
      <svg width="14" height="14" viewBox="0 0 14 14" className="ml-[2px]"><rect x="0" y="2" width="12" height="11" fill="#eef2f4" /><circle cx="6" cy="7.500" r="3" fill="none" stroke="#9aa" strokeDasharray="1.500 1" strokeWidth="1.500" /><path d="M9 0H14V4H9Z" fill="#f07038" /></svg>
      <svg width="15" height="15" viewBox="0 0 15 15" className="ml-[4px]"><path d="M2 1H8V5H10L6 10 1 5H3Z" fill="#2fae30" stroke="#0c6a10" strokeWidth=".7" /><path d="M7 11 13 8 14.500 11 8 14.500Z" fill="#99a3ab" stroke="#444" /></svg>
      <svg width="16" height="15" viewBox="0 0 16 15" className="ml-[2px]"><path d="M1 1 5 6 2 12M13 1 8 6" stroke="#123" strokeWidth="1.300" fill="none" /><path d="M6 2 11 3 14 9 10 8 6 12Z" fill="#d7e3ec" stroke="#123" /><path d="M4 13H15M12 11 15 13 12 15" stroke="#123" fill="none" /></svg>
      <span className="ml-[6px] whitespace-nowrap tracking-[-0.05px]">03:44 p.m.</span>
    </div>
  </div>
);

export default function App() {
  return (
    <div className="relative flex h-[1024px] w-[1280px] flex-col overflow-hidden bg-[#ece9d8] font-['DejaVu_Sans_Condensed','DejaVu_Sans',sans-serif] text-[11px] leading-[13px] tracking-[-0.15px] text-black">
      <div className="flex h-[26px] shrink-0 items-center bg-gradient-to-b from-[#9db9f0] via-[#7a96df] via-20% to-[#84aeea] pr-[2px] pl-[3px]">
        <PaintIcon />
        <div className="ml-[4px] flex-1 font-['Open_Sans'] text-[13px] leading-[18px] font-bold tracking-[-0.35px] text-[#dce6fa]">VBmasVC - Paint</div>
        <div className="flex gap-[2px]"><WinBtn kind="min" act={false} /><WinBtn kind="restore" act={false} /><WinBtn kind="close" act={false} /></div>
      </div>
      <div className="flex h-[19px] shrink-0 items-center pl-[5px] text-[#a5a295]">
        <T c="w-[48px]">Archivo</T><T c="w-[45px]">Edición</T><T c="w-[28px]">Ver</T><T c="w-[48px]">Imagen</T><T c="w-[48px]">Colores</T><T>Ayuda</T>
      </div>
      <div className="flex h-[876px] shrink-0 border-t border-b border-t-white border-b-white">
        <div className="w-[57px] shrink-0 border-t border-r border-[#aca899] pt-[4px] pl-[3px]">
          <div className="grid grid-cols-[25px_25px]">
            {tools.map((t, i) => (
              <div key={i} className={'flex h-[25px] w-[25px] items-center justify-center ' + (i === 1 ? 'rounded-[3px] border border-[#9db4d6] bg-white' : '')}>
                <svg width="17" height="17" viewBox="0 0 17 17">{t}</svg>
              </div>
            ))}
          </div>
          <div className="mt-[5px] ml-[4px] flex h-[65px] w-[42px] flex-col gap-[3px] border border-t-[#aca899] border-r-white border-b-white border-l-[#aca899] pt-[1px]">
            <Opt solid /><Opt />
          </div>
        </div>
        <div className="flex w-[1204px] shrink-0 flex-col">
          <div className="relative flex h-[857px] shrink-0 border-t border-l border-[#716f64] bg-[#808080] pl-[3px]">
            <Reader />
            <div className="absolute top-px left-0 h-[3px] w-[3px] border border-[#316ac5] bg-white" />
            <div className="absolute top-px left-[642px] h-[3px] w-[3px] border border-[#316ac5] bg-white" />
            <div className="absolute top-[515px] left-0 h-[3px] w-[3px] border border-[#316ac5] bg-white" />
          </div>
          <div className="flex h-[17px] bg-[#f3f3ee]">
            <ScrollBtn d="M6.500 .8 2.500 4.500 6.500 8.200" c="h-[17px] w-[17px]" />
            <div className="ml-px flex h-[17px] w-[1094px] items-center justify-center gap-px rounded-[3px] border border-[#a0b8ec] bg-gradient-to-b from-[#cfdcfd] to-[#b9cdfa] shadow-[inset_0_0_0_1px_#e2ebff]">
              {[0, 1, 2, 3].map(i => <div key={i} className="h-[6px] w-px bg-[#8aa6e8]" />)}
            </div>
            <div className="flex-1" />
            <ScrollBtn d="M2.500 .8 6.500 4.500 2.500 8.200" c="h-[17px] w-[17px]" />
          </div>
        </div>
        <div className="flex w-[18px] shrink-0 flex-col bg-[#f3f3ee] pt-[2px]">
          <ScrollBtn d="M.8 6.500 4.500 2.500 8.200 6.500" c="h-[17px] w-[17px]" />
          <div className="flex h-[683px] w-[17px] flex-col items-center justify-center gap-px rounded-[3px] border border-[#a0b8ec] bg-gradient-to-r from-[#cfdcfd] to-[#b9cdfa] shadow-[inset_0_0_0_1px_#e2ebff]">
            {[0, 1, 2, 3].map(i => <div key={i} className="h-px w-[6px] bg-[#8aa6e8]" />)}
          </div>
          <div className="flex-1" />
          <ScrollBtn d="M.8 2.500 4.500 6.500 8.200 2.500" c="h-[17px] w-[17px]" />
          <div className="h-[17px] bg-[#ece9d8]" />
        </div>
      </div>
      <div className="flex h-[49px] shrink-0 border-b border-[#aca899] pt-[8px] pl-[1px]">
        <div className="flex h-[30px] w-[28px] border border-t-black border-r-white border-b-white border-l-black bg-[#f6f5ef] pt-[4px] pl-[3px]">
          <div className="z-1 h-[14px] w-[14px] shrink-0 border border-white bg-black shadow-[1px_1px_0_#808080]" />
          <div className="mt-[7px] -ml-[7px] h-[14px] w-[14px] shrink-0 border border-[#d6d3c4] bg-white shadow-[1px_1px_0_#b0ad9e]" />
        </div>
        <div className="ml-[2px] flex flex-col gap-[1px]">
          {swatches.map((r, i) => <div key={i} className="flex gap-[1px]">{r.map(s => <div key={s} className={'h-[15px] w-[15px] border-t-2 border-r border-b border-l-2 border-t-[#404040] border-r-white border-b-white border-l-[#404040] ' + s} />)}</div>)}
        </div>
      </div>
      <div className="flex h-[24px] shrink-0 items-center border-t border-white pl-[1px] shadow-[inset_0_2px_2px_#aca899]">
        <T c="w-[1039px] pt-[1px] tracking-[-0.1px]">Para obtener Ayuda, haga clic en Temas de Ayuda en el menú Ayuda.</T>
        <div className="mt-[4px] h-[17px] w-[119px] border-l border-[#c5c2b2] pt-[2px] pl-[4px] tracking-[0px]">646,642</div>
        <div className="mt-[4px] h-[17px] w-[118px] border-r border-l border-[#c5c2b2]" />
      </div>
      <Taskbar />
      <Oscilloscope />
      <FunctionGenerator />
    </div>
  );
}
